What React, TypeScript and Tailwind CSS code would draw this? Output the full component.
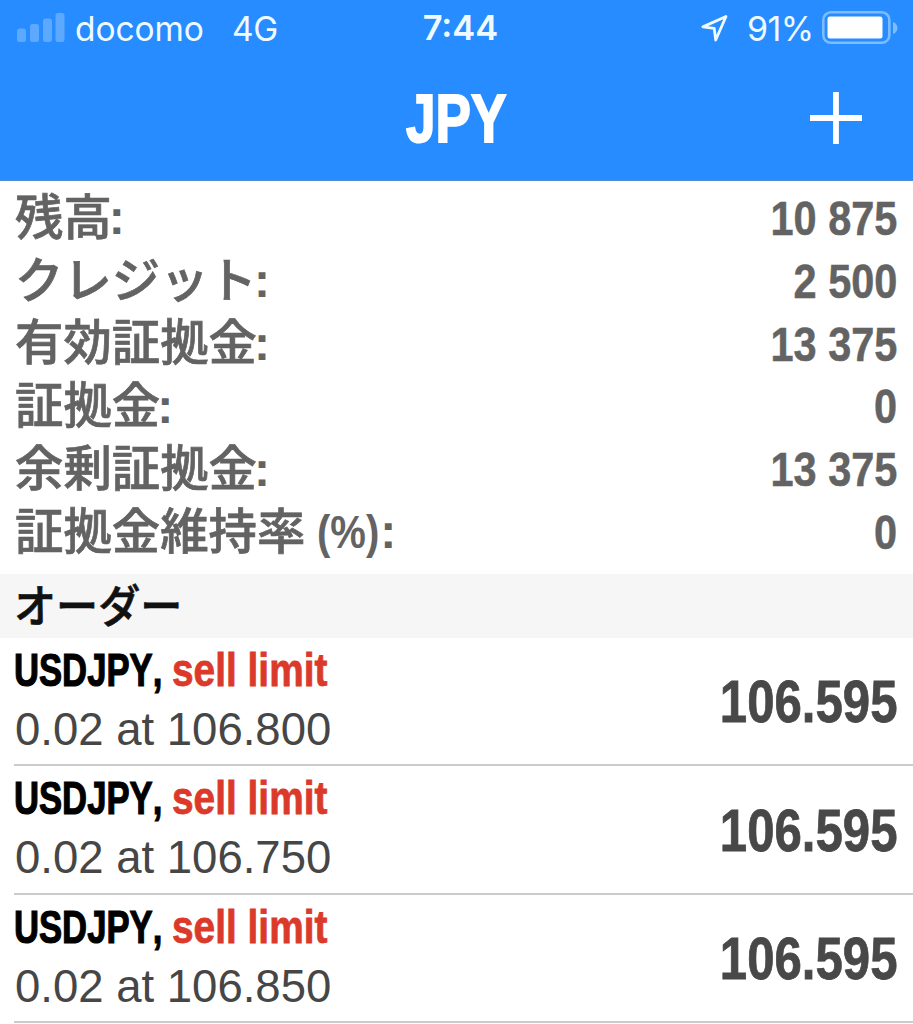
import { ReactNode } from 'react';
import clsx from 'clsx';

interface SummaryItem {
  label: string;
  suffix?: string;
  value: string;
}

interface Order {
  symbol: string;
  type: string;
  volume: string;
  price: string;
  current: string;
}

const summary: SummaryItem[] = [
  { label: '残高', value: '10 875' },
  { label: 'クレジット', value: '2 500' },
  { label: '有効証拠金', value: '13 375' },
  { label: '証拠金', value: '0' },
  { label: '余剰証拠金', value: '13 375' },
  { label: '証拠金維持率', suffix: '(%)', value: '0' },
];

const orders: Order[] = [
  { symbol: 'USDJPY', type: 'sell limit', volume: '0.02', price: '106.800', current: '106.595' },
  { symbol: 'USDJPY', type: 'sell limit', volume: '0.02', price: '106.750', current: '106.595' },
  { symbol: 'USDJPY', type: 'sell limit', volume: '0.02', price: '106.850', current: '106.595' },
];

const Condensed = ({ className, children }: { className?: string; children: ReactNode }) => (
  <span
    className={clsx(
      'inline-block whitespace-pre font-["Liberation_Sans",Arial,sans-serif] font-bold [font-kerning:none]',
      className,
    )}
  >
    {children}
  </span>
);

const SignalBars = () => (
  <svg width="48" height="30" viewBox="0 0 48 30" fill="#fff" opacity="0.25" aria-hidden="true">
    <rect x="0" y="15.5" width="9" height="13.5" rx="2.5" />
    <rect x="13" y="11" width="9" height="18" rx="2.5" />
    <rect x="26" y="5.5" width="9" height="23.5" rx="2.5" />
    <rect x="38.5" y="0" width="9" height="29" rx="2.5" />
  </svg>
);

const LocationArrow = () => (
  <svg width="28" height="28" viewBox="0 0 28 28" fill="none" aria-hidden="true">
    <path
      d="M25 2.5 1.9 12.9 13.2 14.3 14.7 26Z"
      stroke="#effaff"
      strokeWidth="2.8"
      strokeLinejoin="round"
    />
  </svg>
);

const Battery = () => (
  <svg width="77" height="34" viewBox="0 0 77 34" aria-hidden="true">
    <rect x="1.3" y="1.3" width="66" height="30.5" rx="7.5" fill="none" stroke="#7cbcff" strokeWidth="2.6" />
    <rect x="5.5" y="5.5" width="55" height="22" rx="2.5" fill="#fff" />
    <path d="M71 11c6 2.2 6 9.8 0 12Z" fill="#7cbcff" />
  </svg>
);

const StatusBar = () => (
  <div className="grid h-[56px] grid-cols-3 items-center font-[Inter,sans-serif] text-[34px] leading-none text-[#effaff]">
    <div className="flex items-center pl-[17px]">
      <SignalBars />
      <span className="ml-[10px] w-[129px] pt-[3px] text-[33.5px] tracking-[-0.1px]">docomo</span>
      <span className="ml-[28px] pt-[3px] text-[33.5px] tracking-[-0.5px]">4G</span>
    </div>
    <div className="text-center text-[34.5px] font-semibold">
      <span className="ml-[8px]">7:44</span>
    </div>
    <div className="flex items-center justify-end pr-[14px]">
      <LocationArrow />
      <span className="ml-[18px] w-[75px] pt-px whitespace-nowrap text-[34px] tracking-[-0.6px]">91%</span>
      <Battery />
    </div>
  </div>
);

const NavBar = () => (
  <div className="grid h-[124px] grid-cols-[1fr_auto_1fr] items-center">
    <h1 className="col-start-2 flex">
      <Condensed className="scale-x-[0.77] text-[69px] leading-[126px] text-white [-webkit-text-stroke:2px_#fff]">
        JPY
      </Condensed>
    </h1>
    <button className="mr-[50px] mb-[3px] justify-self-end" aria-label="Add">
      <svg width="54" height="54" viewBox="0 0 54 54" stroke="#fff" strokeWidth="5.8" aria-hidden="true">
        <path d="M1 27h52M27 1v52" />
      </svg>
    </button>
  </div>
);

const SummaryRow = ({ label, suffix, value }: SummaryItem) => (
  <div className="flex h-[62.8px] items-center justify-between pr-[16px] pl-[15px] text-[#636363]">
    <div className="flex h-full items-center">
      <span className="pb-[9px] font-['Noto_Sans_CJK_JP',sans-serif] text-[48.4px] leading-[50px] font-medium [-webkit-text-stroke:0.7px_#636363]">
        {label}
      </span>
      {suffix && (
        <span className="ml-[12px] w-[66px]">
          <Condensed className="origin-left scale-x-[0.87] text-[46px]">{suffix}</Condensed>
        </span>
      )}
      <Condensed className="-ml-[3px] text-[48px]">:</Condensed>
    </div>
    <Condensed className="origin-right scale-x-[0.855] text-[48.5px] [-webkit-text-stroke:0.5px_#636363]">
      {value}
    </Condensed>
  </div>
);

const OrderRow = ({ symbol, type, volume, price, current }: Order) => (
  <li className="ml-[14px] flex h-[128.5px] items-center justify-between border-b-2 border-[#cbcbcf] pr-[16px]">
    <div className="h-full">
      <div className="mt-[4px] flex h-[58px] items-center">
        <span className="w-[158px]">
          <Condensed className="origin-left scale-x-[0.745] text-[46.5px] text-black [-webkit-text-stroke:1.2px_#000]">
            {symbol},
          </Condensed>
        </span>
        <Condensed className="origin-left scale-x-[0.835] text-[46.5px] text-[#db3a2b] [-webkit-text-stroke:0.8px_#db3a2b]">
          {type}
        </Condensed>
      </div>
      <div className="ml-px h-[60px] font-['Liberation_Sans',Arial,sans-serif] text-[45.5px] leading-[59px] whitespace-pre text-[#464646]">
        {volume} at {price}
      </div>
    </div>
    <Condensed className="mt-[3px] origin-right scale-x-[0.84] text-[58.5px] text-[#484848] [-webkit-text-stroke:0.8px_#484848]">
      {current}
    </Condensed>
  </li>
);

export default function App() {
  return (
    <main className="h-[1024px] w-[913px] overflow-hidden bg-white">
      <header className="h-[181px] border-b border-[#4f8fd6] bg-[#268cff]">
        <StatusBar />
        <NavBar />
      </header>
      <section className="h-[393px] pt-[6px]">
        {summary.map((item) => (
          <SummaryRow key={item.label} {...item} />
        ))}
      </section>
      <h2 className="h-[63.5px] bg-[#f6f6f6] pl-[14px] font-['Noto_Sans_CJK_JP',sans-serif] text-[45px] leading-[60px] font-medium text-[#111] [-webkit-text-stroke:0.7px_#111]">
        <span className="inline-block origin-left scale-x-[0.935]">オーダー</span>
      </h2>
      <ul>
        {orders.map((order) => (
          <OrderRow key={order.price} {...order} />
        ))}
      </ul>
    </main>
  );
}
